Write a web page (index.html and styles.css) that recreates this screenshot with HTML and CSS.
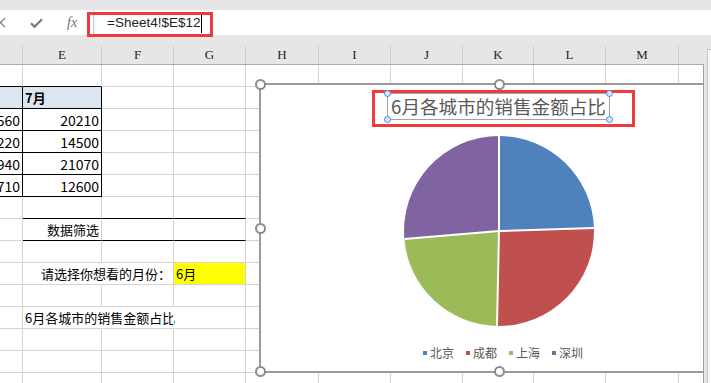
FILE: index.html
```html
<!DOCTYPE html>
<html>
<head>
<meta charset="utf-8">
<link rel="stylesheet" href="styles.css">
</head>
<body>
<div class="app">
  <div class="toolbar">
    <div class="fbar">
      <div class="btns">
        <svg class="ic-x" width="11" height="11" viewBox="0 0 11 11"><path d="M1 1L10 10M10 1L1 10" stroke="#8a8a8a" stroke-width="1.4" fill="none"/></svg>
        <svg class="ic-ok" width="13" height="10" viewBox="0 0 13 10"><path d="M1 5.2L4.6 8.8L12 1.2" fill="none" stroke="#7a7a7a" stroke-width="2.2"/></svg>
        <span class="ic-fx">fx</span>
      </div>
      <div class="input"><span class="formula">=Sheet4!$E$12</span><span class="caret"></span></div>
      <div class="mark"></div>
    </div>
  </div>
  <div class="sheet">
    <div class="grid-area">
      <div class="colhead">
        <span></span><span>E</span><span>F</span><span>G</span><span>H</span><span>I</span><span>J</span><span>K</span><span>L</span><span>M</span><span></span>
      </div>
      <div class="body">
        <!-- row 1 -->
        <div class="c bb"></div><div class="c bb"></div><div class="c"></div><div class="c"></div><div class="c"></div><div class="c"></div><div class="c"></div><div class="c"></div><div class="c"></div><div class="c"></div><div class="c"></div>
        <!-- row 2 -->
        <div class="c hd br bb"></div><div class="c hd br bb l b">7月</div><div class="c"></div><div class="c"></div><div class="c"></div><div class="c"></div><div class="c"></div><div class="c"></div><div class="c"></div><div class="c"></div><div class="c"></div>
        <!-- row 3 -->
        <div class="c r br bb num">560</div><div class="c r br bb num">20210</div><div class="c"></div><div class="c"></div><div class="c"></div><div class="c"></div><div class="c"></div><div class="c"></div><div class="c"></div><div class="c"></div><div class="c"></div>
        <!-- row 4 -->
        <div class="c r br bb num">220</div><div class="c r br bb num">14500</div><div class="c"></div><div class="c"></div><div class="c"></div><div class="c"></div><div class="c"></div><div class="c"></div><div class="c"></div><div class="c"></div><div class="c"></div>
        <!-- row 5 -->
        <div class="c r br bb num">940</div><div class="c r br bb num">21070</div><div class="c"></div><div class="c"></div><div class="c"></div><div class="c"></div><div class="c"></div><div class="c"></div><div class="c"></div><div class="c"></div><div class="c"></div>
        <!-- row 6 -->
        <div class="c r br bb num">710</div><div class="c r br bb num">12600</div><div class="c"></div><div class="c"></div><div class="c"></div><div class="c"></div><div class="c"></div><div class="c"></div><div class="c"></div><div class="c"></div><div class="c"></div>
        <!-- row 7 -->
        <div class="c"></div><div class="c bb"></div><div class="c bb"></div><div class="c bb"></div><div class="c"></div><div class="c"></div><div class="c"></div><div class="c"></div><div class="c"></div><div class="c"></div><div class="c"></div>
        <!-- row 8 -->
        <div class="c"></div><div class="c r bb">数据筛选</div><div class="c bb"></div><div class="c bb"></div><div class="c"></div><div class="c"></div><div class="c"></div><div class="c"></div><div class="c"></div><div class="c"></div><div class="c"></div>
        <!-- row 9 -->
        <div class="c"></div><div class="c"></div><div class="c"></div><div class="c"></div><div class="c"></div><div class="c"></div><div class="c"></div><div class="c"></div><div class="c"></div><div class="c"></div><div class="c"></div>
        <!-- row 10 -->
        <div class="c"></div><div class="c nr"></div><div class="c r">请选择你想看的月份：</div><div class="c yl l">6月</div><div class="c"></div><div class="c"></div><div class="c"></div><div class="c"></div><div class="c"></div><div class="c"></div><div class="c"></div>
        <!-- row 11 -->
        <div class="c"></div><div class="c"></div><div class="c"></div><div class="c"></div><div class="c"></div><div class="c"></div><div class="c"></div><div class="c"></div><div class="c"></div><div class="c"></div><div class="c"></div>
        <!-- row 12 -->
        <div class="c"></div><div class="c l nr">6月各城市的销售金额占比</div><div class="c nr"></div><div class="c"></div><div class="c"></div><div class="c"></div><div class="c"></div><div class="c"></div><div class="c"></div><div class="c"></div><div class="c"></div>
        <!-- row 13 -->
        <div class="c"></div><div class="c"></div><div class="c"></div><div class="c"></div><div class="c"></div><div class="c"></div><div class="c"></div><div class="c"></div><div class="c"></div><div class="c"></div><div class="c"></div>
        <!-- row 14 -->
        <div class="c"></div><div class="c"></div><div class="c"></div><div class="c"></div><div class="c"></div><div class="c"></div><div class="c"></div><div class="c"></div><div class="c"></div><div class="c"></div><div class="c"></div>
        <!-- row 15 -->
        <div class="c"></div><div class="c"></div><div class="c"></div><div class="c"></div><div class="c"></div><div class="c"></div><div class="c"></div><div class="c"></div><div class="c"></div><div class="c"></div><div class="c"></div>

        <div class="chart">
          <div class="tbox">
            <div class="ttl">6月各城市的销售金额占比
              <i class="bh tl"></i><i class="bh tr"></i><i class="bh bl"></i><i class="bh br2"></i>
            </div>
          </div>
          <svg class="pie" width="194" height="194" viewBox="0 0 194 194">
            <path d="M97 97 L97 2 A95 95 0 0 1 191.95 94.02 Z" fill="#4f81bd"/>
            <path d="M97 97 L191.95 94.02 A95 95 0 0 1 95.01 191.98 Z" fill="#c0504d"/>
            <path d="M97 97 L95.01 191.98 A95 95 0 0 1 2.35 105.11 Z" fill="#9bbb59"/>
            <path d="M97 97 L2.35 105.11 A95 95 0 0 1 97 2 Z" fill="#8064a2"/>
            <g stroke="#fff" stroke-width="2" fill="none">
              <path d="M97 97 L97 2"/>
              <path d="M97 97 L191.95 94.02"/>
              <path d="M97 97 L95.01 191.98"/>
              <path d="M97 97 L2.35 105.11"/>
            </g>
          </svg>
          <div class="legend">
            <span class="li"><i class="sw s1"></i>北京</span>
            <span class="li"><i class="sw s2"></i>成都</span>
            <span class="li"><i class="sw s3"></i>上海</span>
            <span class="li"><i class="sw s4"></i>深圳</span>
          </div>
          <i class="h h1"></i><i class="h h2"></i><i class="h h3"></i><i class="h h4"></i><i class="h h5"></i>
        </div>
      </div>
    </div>
    <div class="vscroll"><div class="vs-box"></div></div>
  </div>
</div>
</body>
</html>
```

FILE: styles.css
```css
html, body {
  margin: 0;
  padding: 0;
}
body {
  width: 711px;
  height: 383px;
  overflow: hidden;
  background: #fff;
  font-family: "Noto Sans CJK SC", "Noto Sans", sans-serif;
}
.app {
  width: 711px;
  height: 383px;
  display: flex;
  flex-direction: column;
  overflow: hidden;
}
.toolbar {
  flex: none;
  height: 46px;
  background: #e6e6e6;
}
.fbar {
  position: relative;
  margin-top: 10px;
  height: 25px;
  background: #fff;
  display: flex;
  align-items: center;
}
.btns {
  width: 94px;
  height: 100%;
  display: flex;
  align-items: center;
  box-sizing: border-box;
  border-right: 1px solid #d6d6d6;
  flex: none;
}
.ic-x {
  margin-left: -5px;
  flex: none;
}
.ic-ok {
  margin-left: 24px;
  flex: none;
}
.ic-fx {
  margin-left: 24px;
  font-family: "Liberation Serif", serif;
  font-style: italic;
  font-size: 14px;
  color: #707070;
  line-height: 1;
}
.input {
  flex: 1;
  height: 100%;
  display: flex;
  align-items: center;
  padding-left: 12px;
  box-sizing: border-box;
  border-left: 1px solid #ececec;
}
.formula {
  font-family: "Liberation Sans", sans-serif;
  font-size: 13.5px;
  color: #222;
  white-space: nowrap;
}
.caret {
  width: 1px;
  height: 20px;
  background: #000;
  margin-left: 1px;
}
.mark {
  position: absolute;
  left: 87px;
  top: 2px;
  width: 126px;
  height: 25px;
  box-sizing: border-box;
  border: 3px solid #f0393b;
  pointer-events: none;
}

.sheet {
  flex: 1;
  display: flex;
  min-height: 0;
}
.grid-area {
  width: 704px;
  flex: none;
  display: flex;
  flex-direction: column;
}
.colhead,
.body {
  display: grid;
  grid-template-columns: 23px 79px 72px 72px 73px 72px 72px 71px 72px 73px 24px;
}
.colhead {
  height: 19px;
  box-sizing: border-box;
  border-bottom: 1px solid #aaaaaa;
  background: #e6e6e6;
  width: 704px;
}
.colhead span {
  border-right: 1px solid #cdcdcd;
  display: flex;
  align-items: center;
  justify-content: center;
  font-family: "Liberation Serif", serif;
  font-size: 13px;
  color: #1e1e1e;
}
.colhead span:last-child {
  border-right: none;
}
.body {
  position: relative;
  width: 704px;
  box-sizing: border-box;
  border-right: 1px solid #a0a0a0;
  overflow: hidden;
  grid-auto-rows: 22px;
  flex: 1;
  align-content: start;
}
.c {
  box-sizing: border-box;
  height: 22px;
  border-right: 1px solid #d4d4d4;
  border-bottom: 1px solid #d4d4d4;
  display: flex;
  align-items: center;
  white-space: nowrap;
  font-size: 13px;
  color: #000;
  min-width: 0;
}
.c.num {
  font-size: 14px;
}
.body > .c:nth-child(11n) {
  border-right: none;
}
.r {
  justify-content: flex-end;
  padding-right: 2px;
}
.l {
  justify-content: flex-start;
  padding-left: 2px;
}
.b {
  font-weight: bold;
}
.hd {
  background: #dce6f1;
}
.bb {
  border-bottom-color: #000;
}
.br {
  border-right-color: #000;
}
.nr {
  border-right-color: #fff;
}
.yl {
  background: #ffff00;
}

.chart {
  position: absolute;
  left: 259px;
  top: 18px;
  width: 480px;
  height: 290px;
  box-sizing: border-box;
  border: 2px solid #9a9a9a;
  background: #fff;
  display: flex;
  flex-direction: column;
  align-items: center;
}
.tbox {
  margin-top: 5px;
  margin-left: 9px;
  width: 263px;
  height: 37px;
  box-sizing: border-box;
  border: 3px solid #f23a3c;
  padding-left: 12px;
  display: flex;
  align-items: flex-start;
  flex: none;
}
.ttl {
  position: relative;
  width: 223px;
  height: 27px;
  box-sizing: border-box;
  border: 1px solid #a3a3a3;
  display: flex;
  align-items: center;
  justify-content: center;
  font-size: 18.6px;
  line-height: 1;
  color: #595959;
  white-space: nowrap;
}
.bh {
  position: absolute;
  width: 7px;
  height: 7px;
  box-sizing: border-box;
  border-radius: 50%;
  border: 1px solid #3d8fdd;
  background: #d6e8fa;
}
.bh.tl { left: -4px; top: -4px; }
.bh.tr { right: -4px; top: -4px; }
.bh.bl { left: -4px; bottom: -4px; }
.bh.br2 { right: -4px; bottom: -4px; }
.pie {
  margin-top: 7px;
  flex: none;
}
.legend {
  margin-top: 17px;
  padding-left: 8px;
  display: flex;
  justify-content: center;
  gap: 12px;
  font-size: 12px;
  line-height: 16px;
  color: #595959;
}
.li {
  display: flex;
  align-items: center;
  gap: 3px;
}
.sw {
  width: 4px;
  height: 4px;
  display: block;
}
.s1 { background: #4f81bd; }
.s2 { background: #c0504d; }
.s3 { background: #9bbb59; }
.s4 { background: #8064a2; }
.h {
  position: absolute;
  width: 11px;
  height: 11px;
  box-sizing: border-box;
  border: 2px solid #8c8c8c;
  border-radius: 50%;
  background: #fff;
}
.h1 { left: -6px; top: -6px; }
.h2 { left: 233px; top: -6px; }
.h3 { left: -6px; top: 138px; }
.h4 { left: -6px; top: 281px; }
.h5 { left: 233px; top: 281px; }

.vscroll {
  flex: 1;
  background: #e6e6e6;
  display: flex;
  flex-direction: column;
}
.vs-box {
  margin-top: 3px;
  margin-left: 3px;
  flex: 1;
  box-sizing: border-box;
  border-left: 1px solid #c6c6c6;
  border-top: 1px solid #c6c6c6;
  background: #f7f7f7;
}
```
